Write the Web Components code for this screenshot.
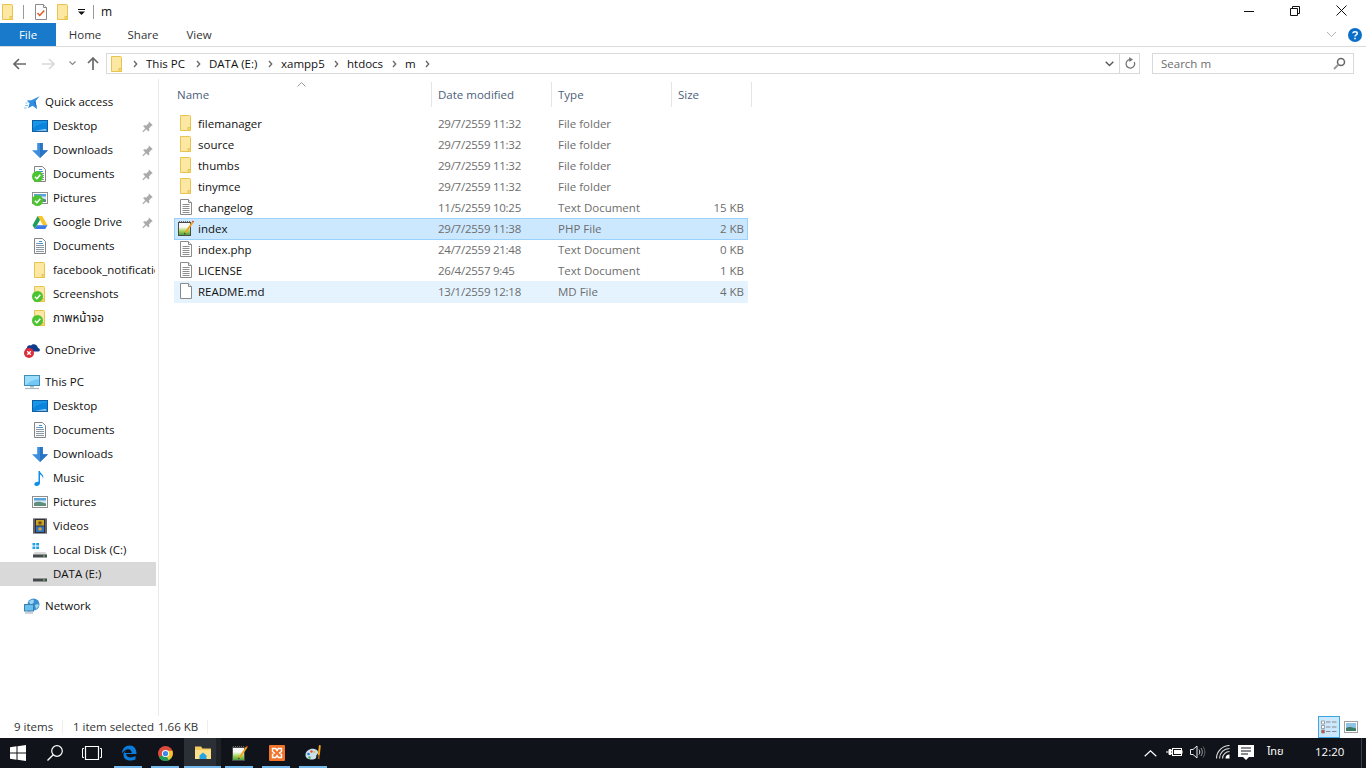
<!DOCTYPE html>
<html lang="en">
<head>
<meta charset="utf-8">
<title>m</title>
<style>
  html, body { margin: 0; height: 100%; overflow: hidden; background: #fff; }
  body { font: 11.5px "Open Sans", "Noto Sans", "Noto Sans Thai", sans-serif; color: #1a1a1a; }
</style>
</head>
<body>
<explorer-window>
  <win-title-bar slot="top" title-text="m"></win-title-bar>
  <win-ribbon slot="top"></win-ribbon>
  <win-address-bar slot="top"></win-address-bar>

  <nav-pane slot="nav">
    <nav-item icon="star" level="0">Quick access</nav-item>
    <nav-item icon="desktop" pin>Desktop</nav-item>
    <nav-item icon="download" pin>Downloads</nav-item>
    <nav-item icon="documents" badge="ok" pin>Documents</nav-item>
    <nav-item icon="pictures" badge="ok" pin>Pictures</nav-item>
    <nav-item icon="gdrive" pin>Google Drive</nav-item>
    <nav-item icon="documents">Documents</nav-item>
    <nav-item icon="folder">facebook_notification</nav-item>
    <nav-item icon="folder" badge="ok">Screenshots</nav-item>
    <nav-item icon="folder" badge="ok">ภาพหน้าจอ</nav-item>
    <nav-item icon="onedrive" level="0" gap>OneDrive</nav-item>
    <nav-item icon="pc" level="0" gap>This PC</nav-item>
    <nav-item icon="desktop">Desktop</nav-item>
    <nav-item icon="documents">Documents</nav-item>
    <nav-item icon="download">Downloads</nav-item>
    <nav-item icon="music">Music</nav-item>
    <nav-item icon="pictures">Pictures</nav-item>
    <nav-item icon="videos">Videos</nav-item>
    <nav-item icon="winDisk">Local Disk (C:)</nav-item>
    <nav-item icon="disk" selected>DATA (E:)</nav-item>
    <nav-item icon="network" level="0" gap>Network</nav-item>
  </nav-pane>

  <file-list slot="main">
    <file-row icon="folder" date="29/7/2559 11:32" type="File folder">filemanager</file-row>
    <file-row icon="folder" date="29/7/2559 11:32" type="File folder">source</file-row>
    <file-row icon="folder" date="29/7/2559 11:32" type="File folder">thumbs</file-row>
    <file-row icon="folder" date="29/7/2559 11:32" type="File folder">tinymce</file-row>
    <file-row icon="textfile" date="11/5/2559 10:25" type="Text Document" size="15 KB">changelog</file-row>
    <file-row icon="notepad" date="29/7/2559 11:38" type="PHP File" size="2 KB" state="selected">index</file-row>
    <file-row icon="textfile" date="24/7/2559 21:48" type="Text Document" size="0 KB">index.php</file-row>
    <file-row icon="textfile" date="26/4/2557 9:45" type="Text Document" size="1 KB">LICENSE</file-row>
    <file-row icon="blank" date="13/1/2559 12:18" type="MD File" size="4 KB" state="hover">README.md</file-row>
  </file-list>

  <win-status-bar slot="bottom"></win-status-bar>
  <win-task-bar slot="bottom"></win-task-bar>
</explorer-window>

<script>
(function () {
  const FONT = '"Open Sans", "Noto Sans", "Noto Sans Thai", sans-serif';

  // all icons on a 16 unit grid unless the entry says otherwise
  const FOLDER = `<path d="M2.500 .5h9a1 1 0 0 1 1 1v14h-10z" fill="#fce8a2" stroke="#e8c34f"/><path d="M10 12.500h2.500v3H10z" fill="#f7d875" stroke="#e8c34f"/>`;
  const PAGE = `<path d="M2.500 .5h8l3 3v12h-11z" fill="#fff" stroke="#8a8a8a"/><path d="M10.500 .5v3h3" fill="#eee" stroke="#8a8a8a"/>`;
  const TEXTLINES = `<path d="M4.500 5.500h7M4.500 7.500h7M4.500 9.500h7M4.500 11.500h7M4.500 13.500h7" stroke="#8d8d8d"/>`;
  const NOTEPAD = `<defs><linearGradient id="np" x1="0" y1="0" x2="0" y2="1"><stop offset=".35" stop-color="#f8f8f8"/><stop offset=".65" stop-color="#a6d65a"/><stop offset="1" stop-color="#3f9b3a"/></linearGradient></defs>
    <rect x=".5" y="2.500" width="12" height="13" fill="url(#np)" stroke="#4a4a4a"/><path d="M1 1.500h11" stroke="#666" stroke-dasharray="1 1"/>
    <path d="M6.500 12.500L14 1.500l1.500 1L8 13.500z" fill="#f0a01c"/><path d="M14 1.500l1.500 1 .5-.9L14.700.5z" fill="#c9301c"/><path d="M6.500 12.500L6 14.500l2-1z" fill="#333"/>`;
  const ICONS = {
    folder: FOLDER,
    blank: `<path d="M2.500 .5h8l3 3v12h-11z" fill="#fff" stroke="#8a8a8a"/><path d="M10.500 .5v3h3" fill="#f2f2f2" stroke="#8a8a8a"/>`,
    textfile: PAGE + TEXTLINES,
    checklist: PAGE + `<path d="M4.500 9l2.200 2.400 4.600-5" fill="none" stroke="#e25a22" stroke-width="1.500"/>`,
    documents: `<g transform="translate(1 0)"><path d="M1.500 .5h8l3 3v12h-11z" fill="#fbfbfb" stroke="#858585"/><path d="M3 5.500h3M3 7.500h8M3 9.500h8M3 11.500h8M3 13.500h8" stroke="#8a98a6"/><path d="M6 3.500h3M6 5.500h4" stroke="#3a97dc"/></g>`,
    notepad: NOTEPAD,
    star: `<g transform="translate(2 1.500) scale(.88)"><path d="M15.500 .8L10.700 6.200l1.800 9-5.100-3.600-5 3 1.600-5.800L.8 5.600l5.300-.2z" fill="#2f8fe0"/><path d="M15.500 .8L9.200 7.400l3.300 7.800-1.800-9z" fill="#1a6cc0"/></g><path d="M1 11.500h3M0 14h2.500M1.500 9h2" stroke="#7cc2f2"/>`,
    desktop: `<rect x=".5" y="2.500" width="15" height="11" fill="#0a84dc" stroke="#0d5fa5"/><path d="M1 13h14v.5H1z" fill="#2c5e89"/><path d="M3 12.500L13.500 11.200 15 12.500z" fill="#dff1fd"/><path d="M1 3h14v1.500C9 5 4 7 1 11z" fill="#1a96e8"/>`,
    download: `<path d="M5.200 1h5.600v7.200H16L8 16 0 8.200h5.200z" fill="#3f8edb"/><path d="M8 1h2.800v7.200H16L8 16z" fill="#2a73c4"/>`,
    pictures: `<rect x=".5" y="2.500" width="15" height="11" fill="#fff" stroke="#8e8e8e"/><rect x="2" y="4" width="12" height="8" fill="#d3e9f5"/><path d="M2 4h12v2.500H2z" fill="#5aa3d8"/><path d="M2 9c3-1.800 6-1.500 12 .5V12H2z" fill="#5d8f7a"/>`,
    gdrive: `<path d="M5.700 2h4.500l5.300 9.200h-4.500z" fill="#f7c52b"/><path d="M5.700 2L.5 11.200l2.300 3.800L8 5.900z" fill="#1f9e5b"/><path d="M2.800 15h10.400l2.300-3.800H5.100z" fill="#3b79e8"/>`,
    onedrive: `<path d="M4.500 13.500h10.300c1.600-.3 1.400-3.400-.8-3.500C13.500 6.500 9 5 7 7.500 4.500 6.500 3 8 3 10 1 10.500 1.500 13.500 4.500 13.500z" transform="translate(0 -4)" fill="#103a8c"/><circle cx="5" cy="11" r="5" fill="#dd2c38"/><path d="M3.200 9.200l3.600 3.600M6.800 9.200l-3.600 3.600" stroke="#fff" stroke-width="1.300"/>`,
    pc: `<rect x=".5" y="1.500" width="15" height="10" fill="#73c7f5" stroke="#3f8db9"/><path d="M1 2h14v3C9 5.500 5 7.500 2 11H1z" fill="#9adcfa"/><path d="M6 12h4v1.500H6z" fill="#9db8c6"/><path d="M1 14.500h14" stroke="#aab8c2" stroke-width="1.200"/>`,
    music: `<path d="M6.500 1h1.300c.3 2.400 4.700 3.500 3.200 7.800-.2-2.500-1.500-3.700-3-4.300V13c0 1.700-1.700 3-3.500 3S2 15 2.500 13.500 5 11.300 6.500 11.800z" fill="#0f8fe8"/>`,
    videos: `<rect x="1" y=".5" width="14" height="15" fill="#2f2f38"/><path d="M2 1.500v13M14 1.500v13" stroke="#cfcfcf" stroke-dasharray="1 1" stroke-width="1.300"/><rect x="4" y="2" width="8" height="5.500" fill="#c9a52a"/><rect x="4" y="8.500" width="8" height="5.500" fill="#2c76c4"/><circle cx="8" cy="5" r="1.800" fill="#7a4a1e"/><circle cx="8" cy="11" r="1.700" fill="#e0a13a"/>`,
    winDisk: `<path d="M.5 1h2.800v2.500H.5zM4.200 1h2.800v2.500H4.200zM.5 4.500h2.800V7H.5zM4.200 4.500h2.800V7H4.200z" fill="#1ea0e8"/><path d="M2.500 10h11l1.500 3H1z" fill="#d8d8d8"/><rect x="1" y="12.500" width="14" height="3" fill="#46484a"/><rect x="11" y="13.500" width="2" height="1" fill="#55e06a"/>`,
    disk: `<path d="M2.500 10h11l1.500 3H1z" fill="#dcdcdc"/><rect x="1" y="12.500" width="14" height="3" fill="#46484a"/><rect x="11" y="13.500" width="2" height="1" fill="#55e06a"/>`,
    network: `<circle cx="9.500" cy="6.500" r="6" fill="#3b8fd0"/><path d="M5 3.500c2-2 3-2 5-1.500l-.5 3-3 2zM11 7l3-1 1 2-3 3z" fill="#9fd6f2"/><rect x=".5" y="6.500" width="9" height="6.500" fill="#69bfee" stroke="#3a7fae"/><path d="M3.500 13.500h3M1 15h8" stroke="#8fa6b5" stroke-width="1.200"/>`,
    pin: `<path d="M9.500 1.500l5 5-1.500.6-3 3 .2 2.900-1.200 1-2.500-2.500L2.700 15l-1-.7 3.500-4-2.500-2.500 1-1.200 2.900.2 3-3z" fill="#aaa"/>`,
    badgeOk: `<circle cx="5.500" cy="5.500" r="5.500" fill="#4cc432"/><path d="M2.900 5.700l2 2 3.400-3.900" fill="none" stroke="#fff" stroke-width="1.500"/>`
  };

  const makeStyle = css => `<style>${css}</style>`;

  class XIcon extends HTMLElement {
    connectedCallback() {
      const size = this.getAttribute('size') || 16;
      const body = ICONS[this.getAttribute('name')] || '';
      this.attachShadow({ mode: 'open' }).innerHTML = makeStyle(`
        :host { display: block; width: ${size}px; height: ${size}px; flex: none; }
        svg { display: block; }
      `) + `<svg width="${size}" height="${size}" viewBox="0 0 16 16">${body}</svg>`;
    }
  }

  class ExplorerWindow extends HTMLElement {
    connectedCallback() {
      this.attachShadow({ mode: 'open' }).innerHTML = makeStyle(`
        :host { display: flex; flex-direction: column; width: 1366px; height: 768px; background: #fff; font: 11.5px ${FONT}; }
        .body { flex: 1; display: flex; min-height: 0; }
      `) + `
        <slot name="top"></slot>
        <div class="body"><slot name="nav"></slot><slot name="main"></slot></div>
        <slot name="bottom"></slot>`;
    }
  }

  class WinTitleBar extends HTMLElement {
    connectedCallback() {
      this.attachShadow({ mode: 'open' }).innerHTML = makeStyle(`
        :host { display: flex; align-items: center; height: 23px; background: #fff; }
        .sep { width: 1px; height: 14px; background: #9a9a9a; }
        .title { margin-left: 7px; color: #111; font-size: 12px; }
        .caption { margin-left: auto; display: flex; height: 21px; margin-right: 2px; margin-bottom: 2px; }
        .caption span { width: 46px; display: flex; align-items: center; justify-content: center; }
      `) + `
        <x-icon name="folder"></x-icon>
        <span class="sep" style="margin-left:7px"></span>
        <x-icon name="checklist" style="margin-left:9px"></x-icon>
        <x-icon name="folder" style="margin-left:6px"></x-icon>
        <svg width="8" height="8" style="margin-left:7px" viewBox="0 0 8 8"><path d="M0 1.500h7" stroke="#111"/><path d="M0 3.500h7L3.500 7z" fill="#111"/></svg>
        <span class="sep" style="margin-left:7px"></span>
        <span class="title">${this.getAttribute('title-text')}</span>
        <div class="caption">
          <span><svg width="10" height="10"><path d="M0 5.500h10" stroke="#111"/></svg></span>
          <span><svg width="10" height="10"><path d="M.5 2.500h7v7h-7zM2.500 2.500v-2h7v7h-2" fill="none" stroke="#111"/></svg></span>
          <span><svg width="11" height="11"><path d="M.5.500l10 10M10.500.500l-10 10" stroke="#111"/></svg></span>
        </div>`;
    }
  }

  class WinRibbon extends HTMLElement {
    connectedCallback() {
      this.attachShadow({ mode: 'open' }).innerHTML = makeStyle(`
        :host { display: flex; align-items: stretch; height: 23px; border-bottom: 1px solid #dadbdc; color: #333; }
        .tab { display: flex; align-items: center; justify-content: center; width: 58px; }
        .file { width: 56px; background: #1979ca; color: #fff; }
        .end { margin-left: auto; display: flex; align-items: center; gap: 11px; padding-right: 4px; }
        .help { display: block; }
      `) + `
        <div class="tab file">File</div>
        <div class="tab">Home</div>
        <div class="tab">Share</div>
        <div class="tab" style="width:54px">View</div>
        <div class="end">
          <svg width="11" height="7"><path d="M1 1l4.500 4.500L10 1" fill="none" stroke="#b3b3b3"/></svg>
          <svg class="help" width="14" height="14" viewBox="0 0 14 14"><circle cx="7" cy="7" r="7" fill="#0b6fc9"/><path d="M4.800 5.300C5 3.300 9.200 3.200 9.200 5.400 9.200 7 7 7 7 8.500" fill="none" stroke="#fff" stroke-width="1.500"/><path d="M6.200 9.700h1.600v1.600H6.200z" fill="#fff"/></svg>
        </div>`;
    }
  }

  class WinAddressBar extends HTMLElement {
    connectedCallback() {
      const CHEV = `<svg class="chev" width="5" height="8"><path d="M1 1l2.700 3L1 7" fill="none" stroke="#666" stroke-width="1.300"/></svg>`;
      const crumb = (t, w) => `<span class="crumb" style="width:${w}px">${t}</span>${CHEV}`;
      this.attachShadow({ mode: 'open' }).innerHTML = makeStyle(`
        :host { display: flex; align-items: center; height: 32px; padding-top: 1px; box-sizing: border-box; }
        .nav { display: flex; align-items: center; width: 106px; flex: none; }
        .box { flex: none; height: 19px; border: 1px solid #d9d9d9; display: flex; align-items: center; }
        .addr { width: 1032px; }
        .crumb { color: #111; margin-left: 8px; white-space: nowrap; flex: none; }
        .chev { flex: none; }
        .tools { margin-left: auto; display: flex; align-items: center; height: 100%; }
        .drop { width: 19px; display: flex; justify-content: center; }
        .refresh { width: 19px; height: 19px; border-left: 1px solid #d9d9d9; display: flex; align-items: center; justify-content: center; }
        .search { width: 200px; margin-left: 12px; color: #6d6d6d; }
        .search span { margin-left: 8px; }
        .search svg { margin-left: auto; margin-right: 7px; }
      `) + `
        <div class="nav">
          <svg style="margin-left:13px" width="13" height="12" viewBox="0 0 13 12"><path d="M6 1L1 6l5 5M1 6h12" fill="none" stroke="#6a6a6a" stroke-width="1.700"/></svg>
          <svg style="margin-left:16px" width="13" height="12" viewBox="0 0 13 12"><path d="M7 1l5 5-5 5M12 6H0" fill="none" stroke="#d8d8d8" stroke-width="1.700"/></svg>
          <svg style="margin-left:14px" width="7" height="5" viewBox="0 0 7 5"><path d="M.5.500l3 3 3-3" fill="none" stroke="#8a8a8a" stroke-width="1.200"/></svg>
          <svg style="margin-left:11px" width="12" height="13" viewBox="0 0 12 13"><path d="M1 6l5-5 5 5M6 1v12" fill="none" stroke="#6a6a6a" stroke-width="1.700"/></svg>
        </div>
        <div class="box addr">
          <x-icon name="folder" style="margin-left:2px"></x-icon>
          <span style="margin-left:8px;display:flex">${CHEV}</span>
          ${crumb('This PC', 50)}${crumb('DATA (E:)', 59)}${crumb('xampp5', 53)}${crumb('htdocs', 45)}${crumb('m', 20)}
          <div class="tools">
            <div class="drop"><svg width="9" height="6"><path d="M.7.700L4.500 4.500 8.300.700" fill="none" stroke="#555" stroke-width="1.300"/></svg></div>
            <div class="refresh"><svg width="12" height="13" viewBox="0 0 12 13"><path d="M6.500 2.500A4.300 4.300 0 1 0 10.300 5" fill="none" stroke="#777" stroke-width="1.300"/><path d="M5 0l4 2.500L5.500 5z" fill="#777"/></svg></div>
          </div>
        </div>
        <div class="box search">
          <span>Search m</span>
          <svg width="13" height="13" viewBox="0 0 13 13"><circle cx="8" cy="5" r="3.500" fill="none" stroke="#666" stroke-width="1.500"/><path d="M5.500 7.500L1 12" stroke="#999" stroke-width="2"/></svg>
        </div>`;
    }
  }

  class NavPane extends HTMLElement {
    connectedCallback() {
      this.attachShadow({ mode: 'open' }).innerHTML = makeStyle(`
        :host { display: flex; flex-direction: column; width: 159px; height: 100%; padding-top: 11px; box-sizing: border-box; border-right: 1px solid #e8e8e8; flex: none; overflow: hidden; }
      `) + `<slot></slot>`;
    }
  }

  class NavItem extends HTMLElement {
    connectedCallback() {
      const icon = this.getAttribute('icon');
      const top = this.getAttribute('level') === '0';
      const badge = this.getAttribute('badge');
      this.attachShadow({ mode: 'open' }).innerHTML = makeStyle(`
        :host { display: flex; align-items: center; height: 24px; width: 156px; flex: none; padding-left: ${top ? 24 : 32}px; box-sizing: border-box; color: #111; position: relative; }
        :host([selected]) { background: #d9d9d9; }
        :host([gap]) { margin-top: 8px; }
        .label { margin-left: 5px; height: 16px; line-height: 16px; white-space: nowrap; overflow: hidden; width: ${top ? 110 : 102}px; }
        .ic { position: relative; width: 16px; height: 16px; flex: none; }
        .badge { position: absolute; left: 0; top: 5px; }
        .pin { position: absolute; left: 141px; top: 6px; }
      `) + `
        <div class="ic"><x-icon name="${icon}"></x-icon>${badge ? `<x-icon class="badge" name="badgeOk"></x-icon>` : ''}</div>
        <span class="label"><slot></slot></span>
        ${this.hasAttribute('pin') ? '<x-icon class="pin" name="pin" size="13"></x-icon>' : ''}`;
    }
  }

  class FileList extends HTMLElement {
    connectedCallback() {
      this.attachShadow({ mode: 'open' }).innerHTML = makeStyle(`
        :host { display: block; flex: 1; position: relative; padding-top: 3px; }
        .head { display: grid; grid-template-columns: 258px 120px 120px 80px; margin-left: 15px; height: 25px; color: #4c607a; }
        .head div { display: flex; align-items: center; border-right: 1px solid #e5e5e5; padding-left: 6px; box-sizing: border-box; }
        .head div:first-child { padding-left: 3px; }
        .caret { position: absolute; left: 138px; top: 3px; }
        .rows { margin-top: 6px; display: block; }
      `) + `
        <div class="head"><div>Name</div><div>Date modified</div><div>Type</div><div>Size</div></div>
        <svg class="caret" width="9" height="5"><path d="M.5 4.500l4-4 4 4" fill="none" stroke="#9a9a9a"/></svg>
        <div class="rows"><slot></slot></div>`;
    }
  }

  class FileRow extends HTMLElement {
    connectedCallback() {
      const a = n => this.getAttribute(n) || '';
      this.attachShadow({ mode: 'open' }).innerHTML = makeStyle(`
        :host { display: grid; grid-template-columns: 258px 119px 120px 77px; width: 574px; margin: 0 0 -1px 15px; height: 22px; padding-bottom: 2px; align-items: center; color: #6d6d6d; box-sizing: border-box; }
        :host([state=selected]) { background: #cce8ff; box-shadow: inset 0 0 0 1px #99d1ff; }
        :host([state=hover]) { background: #e5f3ff; }
        .name { display: flex; align-items: center; padding-left: 4px; color: #111; }
        .name span { margin-left: 4px; }
        .date { padding-left: 6px; letter-spacing: -.25px; }
        .type { padding-left: 7px; }
        .size { text-align: right; padding-right: 4px; }
      `) + `
        <div class="name"><x-icon name="${a('icon')}"></x-icon><span><slot></slot></span></div>
        <div class="date">${a('date')}</div>
        <div class="type">${a('type')}</div>
        <div class="size">${a('size')}</div>`;
    }
  }

  class WinStatusBar extends HTMLElement {
    connectedCallback() {
      this.attachShadow({ mode: 'open' }).innerHTML = makeStyle(`
        :host { display: flex; align-items: center; height: 22px; color: #333; position: relative; }
        span { white-space: nowrap; flex: none; padding-bottom: 2px; }
        .sep { width: 1px; height: 14px; background: #efefef; padding: 0; }
        .views { margin-left: auto; display: flex; align-items: center; margin-right: 8px; gap: 4px; }
        .details { width: 20px; height: 20px; border: 1px solid #3fa5dd; background: #cce8ff; display: flex; align-items: center; justify-content: center; }
      `) + `
        <span style="margin-left:14px;width:48px">9 items</span>
        <span class="sep"></span>
        <span style="margin-left:10px;width:85px">1 item selected</span>
        <span style="width:49px">1.66 KB</span>
        <span class="sep"></span>
        <div class="views">
          <div class="details"><svg width="16" height="14" viewBox="0 0 16 14"><path d="M.5 1h3v3h-3zM.5 5.500h3v3h-3z" fill="#fff" stroke="#8a8a8a" stroke-width=".8"/><path d="M.5 10h3v3h-3z" fill="#d94b3c" stroke="#8a8a8a" stroke-width=".8"/><path d="M5 2h4.500M11 2h4.500M5 7h4.500M11 7h4.500M5 11.500h4.500M11 11.500h4.500" stroke="#8a8a8a"/></svg></div>
          <svg width="14" height="12" viewBox="0 0 14 12"><rect x=".5" y=".5" width="13" height="11" fill="#fff" stroke="#a0a0a0"/><rect x="2" y="2" width="10" height="8" fill="#8fc4e6"/><path d="M2 7c3-1.500 5-1 10 .5V10H2z" fill="#3e7d63"/></svg>
        </div>`;
    }
  }

  class WinTaskBar extends HTMLElement {
    connectedCallback() {
      const app = (svg, open, active, w) => `<div class="app${open ? ' open' : ''}${active ? ' active' : ''}"${w ? ` style="width:${w}px"` : ''}>${svg}</div>`;
      this.attachShadow({ mode: 'open' }).innerHTML = makeStyle(`
        :host { display: flex; align-items: center; height: 30px; background: #10141a; color: #fff; flex: none; }
        .app { width: 37px; height: 30px; display: flex; align-items: center; justify-content: center; position: relative; flex: none; }
        .app.open::after { content: ""; position: absolute; left: 4px; right: 5px; bottom: 0; height: 2px; background: #76b9ed; }
        .app.active { background: linear-gradient(to right, #2b3036 32px, #1e2227 32px); }
        .app.active::after { left: 0; right: 0; }
        .tray { margin-left: auto; width: 222px; display: flex; align-items: center; height: 100%; padding-bottom: 2px; box-sizing: border-box; position: relative; }
        .tray > * { flex: none; }
        .caret { margin-top: 3px; }
        .lang { font-size: 11px; margin-left: 13px; width: 18px; white-space: nowrap; padding-bottom: 2px; }
        .clock { font-size: 11.5px; margin-left: 30px; padding-bottom: 2px; }
        .edge { position: absolute; right: 4px; top: 0; bottom: 0; width: 1px; background: #3a3f45; }
      `) + `
        ${app(`<svg width="16" height="16" viewBox="0 0 16 16"><path d="M0 2.300l6.500-1v6.300H0zM7.500 1.200L16 0v7.600H7.500zM0 8.500h6.500v6.300L0 13.800zM7.500 8.500H16V16l-8.500-1.200z" fill="#fff"/></svg>`, false, false, 36)}
        ${app(`<svg width="16" height="16" viewBox="0 0 16 16"><circle cx="10" cy="6" r="5.300" fill="none" stroke="#fff" stroke-width="1.200"/><path d="M6.200 9.800L.5 15.500" stroke="#fff" stroke-width="1.300"/></svg>`)}
        ${app(`<svg width="20" height="14" viewBox="0 0 20 14"><path d="M3.500.5h13v13h-13z" fill="none" stroke="#fff" stroke-width="1.200"/><path d="M2 2.500H.5v9H2M18 2.500h1.500v9H18" fill="none" stroke="#fff"/></svg>`)}
        ${app(`<svg width="16" height="16" viewBox="0 0 16 16"><path d="M1 8.500C1 3.500 4.500.5 8.500.5c4.500 0 7 3 7 8.500H5c.2 4 6 4.300 9.500 2v3.500c-5 2.200-12 1-12-4.500 0-2 1-3.500 2.500-4.500-.8 1-1 1.500-1.200 2.500h7C10.500 3.500 5 2.500 1 8.500z" fill="#0b7bdc"/></svg>`, true)}
        ${app(`<svg width="15" height="15" viewBox="0 0 16 16"><circle cx="8" cy="8" r="8" fill="#dd4b3e"/><path d="M8 8L1 12a8 8 0 0 0 7 4 8 8 0 0 0 7-4z" fill="#1e9e58"/><path d="M8 5h7.300a8 8 0 0 1-4 10L8 8z" fill="#f6c42d"/><circle cx="8" cy="8" r="3.800" fill="#fff"/><circle cx="8" cy="8" r="2.800" fill="#3e86e8"/></svg>`, true)}
        ${app(`<svg width="16" height="16" viewBox="0 0 16 16"><path d="M0 1.500h6l1.500 2H16V8H0z" fill="#f3cb5f"/><path d="M0 5h16v9H0z" fill="#fbe08a"/><path d="M4.500 10.500L8 7.500l3.500 3V14h-7z" fill="#25a4e6"/></svg>`, true, true)}
        ${app(`<svg width="16" height="16" viewBox="0 0 16 16">${NOTEPAD}</svg>`, true)}
        ${app(`<svg width="16" height="16" viewBox="0 0 16 16"><rect width="16" height="16" rx="1" fill="#f0742a"/><path d="M3.500 3.500h3.200L8 5.500l1.300-2h3.200v3l-2 1.500 2 1.500v3H9.300L8 10.500l-1.300 2H3.500v-3l2-1.500-2-1.500z" fill="none" stroke="#fff" stroke-width="1.400"/></svg>`, true)}
        ${app(`<svg width="17" height="16" viewBox="0 0 16 16"><path d="M0 10C0 5.500 5 3 9 4c4 1 4.500 4 2.500 5.500-1.500 1 0 2.500-1.500 4-2 2-10 1.500-10-3.500z" fill="#c9dfee"/><circle cx="3" cy="9" r="1.300" fill="#2c7fd0"/><circle cx="6" cy="6.500" r="1.200" fill="#e8503a"/><circle cx="4" cy="12.500" r="1.200" fill="#4caf50"/><circle cx="9" cy="7" r="1" fill="#e8b93a"/><path d="M13.500 0l1.800.4-1 9.600h-2z" fill="#f2a51d"/><path d="M12.200 10h2.200l-.4 4h-1.600z" fill="#8a5a24"/></svg>`, true)}
        <div class="tray">
          <svg class="caret" width="13" height="7" viewBox="0 0 13 7"><path d="M.7 6.300L6.500 .8l5.800 5.500" fill="none" stroke="#fff" stroke-width="1.200"/></svg>
          <svg style="margin-left:9px" width="17" height="12" viewBox="0 0 17 12"><path d="M0 6h2.500M3 3.500h2v5H3zM5 4.500h1M5 7.500h1" stroke="#fff" fill="#fff"/><rect x="6.500" y="2.500" width="9" height="7" fill="none" stroke="#fff"/><rect x="8" y="4" width="7" height="4" fill="#fff"/><path d="M16 4.500v3" stroke="#fff"/></svg>
          <svg style="margin-left:7px" width="17" height="14" viewBox="0 0 17 14"><path d="M.5 4.500H3l4-3.500v12L3 9.500H.5z" fill="none" stroke="#e8e8e8"/><path d="M9 4.500c1 1.500 1 3.500 0 5" fill="none" stroke="#ddd"/><path d="M11 3c1.800 2.500 1.800 5.500 0 8" fill="none" stroke="#999"/><path d="M13 1.500c2.500 3.500 2.500 7.500 0 11" fill="none" stroke="#666"/></svg>
          <svg style="margin-left:9px" width="14" height="14" viewBox="0 0 14 14"><path d="M.5 13.500C.5 6.500 6.500.5 13.500.5M3.500 13.500c0-5.500 4.500-10 10-10M6.500 13.500c0-3.800 3.200-7 7-7" fill="none" stroke="#ddd" stroke-width="1.100"/><path d="M13.500 9.500a4 4 0 0 0-4 4h4z" fill="#fff"/></svg>
          <svg style="margin-left:8px" width="16" height="15" viewBox="0 0 16 15"><path d="M0 0h16v12h-5l-3 3-3-3H0z" fill="#fff"/><path d="M3 3h10M3 6h10M3 9h7" stroke="#10141a"/></svg>
          <span class="lang">ไทย</span>
          <span class="clock">12:20</span>
          <span class="edge"></span>
        </div>`;
    }
  }

  customElements.define('x-icon', XIcon);
  customElements.define('explorer-window', ExplorerWindow);
  customElements.define('win-title-bar', WinTitleBar);
  customElements.define('win-ribbon', WinRibbon);
  customElements.define('win-address-bar', WinAddressBar);
  customElements.define('nav-pane', NavPane);
  customElements.define('nav-item', NavItem);
  customElements.define('file-list', FileList);
  customElements.define('file-row', FileRow);
  customElements.define('win-status-bar', WinStatusBar);
  customElements.define('win-task-bar', WinTaskBar);
})();
</script>
</body>
</html>
